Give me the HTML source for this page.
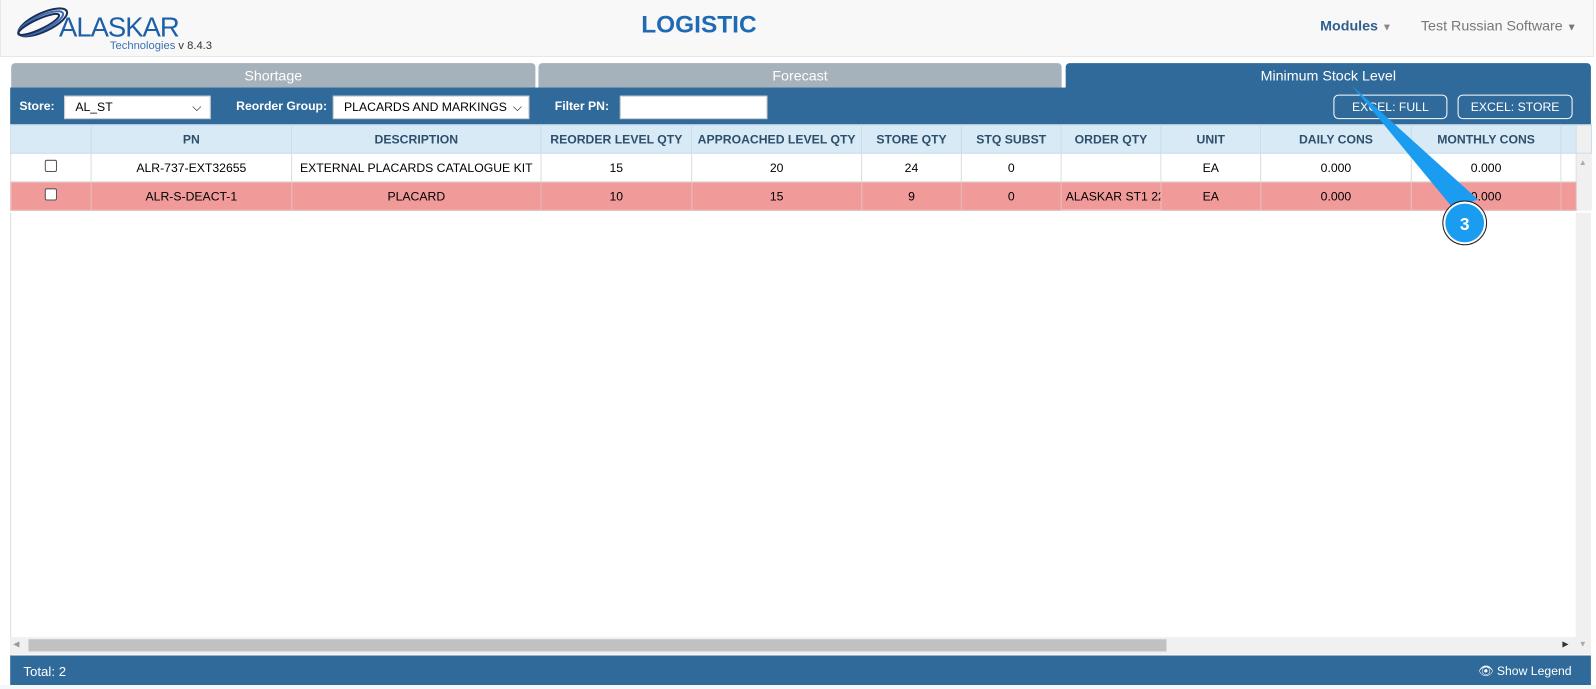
<!DOCTYPE html>
<html><head><meta charset="utf-8"><style>
*{box-sizing:border-box;margin:0;padding:0}
body{width:1596px;height:687px;background:#f3f8fb;font-family:"Liberation Sans",Arial,sans-serif;position:relative;overflow:hidden}
#w{position:absolute;left:0;top:0;width:1568px;height:675px;transform:scale(1.01786);transform-origin:0 0;background:#fff}
.hdr{position:absolute;left:0;top:0;width:1566px;height:56px;background:#f8f8f8;border:1px solid #e7e7e7;border-top:none}
.abs{position:absolute}
.tab{position:absolute;top:62px;height:25px;background:#a5b1bb;color:#fff;font-size:14px;text-align:center;line-height:25px;border-radius:4px 4px 0 0}
.bar{position:absolute;left:10px;top:86px;width:1553px;height:37px;background:#2f6a9a}
.bar label{position:absolute;top:11px;color:#fff;font-weight:bold;font-size:12px}
.sel{position:absolute;top:8px;height:23px;background:#fff;border:1px solid #ccc;font-size:12px;line-height:21px;padding-left:10px;color:#000;overflow:hidden;white-space:nowrap}
.btn{position:absolute;top:7px;height:24px;border:1px solid #fff;border-radius:5px;color:#fff;font-size:12px;text-align:center;line-height:22px}
table{position:absolute;left:10px;top:122px;border-collapse:collapse;font-size:12px}
td,th{height:28px;border:1px solid #ddd;text-align:center;padding:0}
th{height:28px;background:#d9eaf7;color:#2d4f6b;font-weight:bold;border-color:#c9dce9}
tr.p td{background:#f09a9a;border-color:#e6b9b9}
.cb{display:inline-block;width:12px;height:12px;border:1px solid #555;border-radius:2px;background:#fff}
</style></head><body><div id="w">
<div class="hdr"></div>
<svg class="abs" style="left:12px;top:6px" width="60" height="36" viewBox="0 0 60 36">
<g fill="none" stroke="#1b2e5a" stroke-width="2"><ellipse cx="30" cy="16" rx="26" ry="9" transform="rotate(-25 30 16)"/><ellipse cx="28" cy="17" rx="24" ry="7" transform="rotate(-25 28 17)" stroke="#3a6db0"/><ellipse cx="26" cy="18" rx="22" ry="5" transform="rotate(-25 26 18)"/></g></svg>
<div class="abs" style="left:58px;top:12px;font-size:27px;color:#1d5fa8;letter-spacing:-1px">ALASKAR</div>
<div class="abs" style="left:108px;top:39px;font-size:11px;color:#3d72b0">Technologies <span style="color:#333;font-size:11px">v 8.4.3</span></div>
<div class="abs" style="left:630px;top:11px;font-size:24px;font-weight:bold;color:#1f6ab4">LOGISTIC</div>
<div class="abs" style="left:1297px;top:17px;font-size:14px;font-weight:bold;color:#2f5f8f">Modules <span style="color:#888;font-size:10px">▼</span></div>
<div class="abs" style="left:1396px;top:17px;font-size:14px;color:#777">Test Russian Software <span style="font-size:10px">▼</span></div>
<div class="tab" style="left:11px;width:515px">Shortage</div>
<div class="tab" style="left:529px;width:514px">Forecast</div>
<div class="tab" style="left:1047px;width:516px;background:#2f6a9a">Minimum Stock Level</div>
<div class="bar">
<label style="left:9px">Store:</label>
<div class="sel" style="left:53px;width:144px">AL_ST<span style="position:absolute;right:8px;top:0">⌵</span></div>
<label style="left:222px">Reorder Group:</label>
<div class="sel" style="left:317px;width:193px">PLACARDS AND MARKINGS<span style="position:absolute;right:0;top:0;background:#fff;padding:0 6px">⌵</span></div>
<label style="left:535px">Filter PN:</label>
<div class="sel" style="left:599px;width:145px"></div>
<div class="btn" style="left:1300px;width:112px">EXCEL: FULL</div>
<div class="btn" style="left:1422px;width:113px">EXCEL: STORE</div>
</div>
<table>
<tr><th style="width:79px"></th><th style="width:197px">PN</th><th style="width:245px">DESCRIPTION</th><th style="width:148px">REORDER LEVEL QTY</th><th style="width:167px">APPROACHED LEVEL QTY</th><th style="width:98px">STORE QTY</th><th style="width:98px">STQ SUBST</th><th style="width:98px">ORDER QTY</th><th style="width:98px">UNIT</th><th style="width:148px">DAILY CONS</th><th style="width:147px">MONTHLY CONS</th><th style="width:15px"></th><th style="width:15px;background:#f0f0f0"></th></tr>
<tr><td><span class="cb"></span></td><td>ALR-737-EXT32655</td><td>EXTERNAL PLACARDS CATALOGUE KIT</td><td>15</td><td>20</td><td>24</td><td>0</td><td></td><td>EA</td><td>0.000</td><td>0.000</td><td></td><td style="background:#f0f0f0;border:none"></td></tr>
<tr class="p"><td><span class="cb"></span></td><td>ALR-S-DEACT-1</td><td>PLACARD</td><td>10</td><td>15</td><td>9</td><td>0</td><td style="text-align:left;padding-left:4px;white-space:nowrap;overflow:hidden;max-width:98px">ALASKAR ST1 22</td><td>EA</td><td>0.000</td><td>0.000</td><td></td><td style="background:#f0f0f0;border:none"></td></tr>
</table>
<div class="abs" style="left:10px;top:209px;width:1px;height:435px;background:#ddd"></div>
<div class="abs" style="left:1548px;top:209px;width:15px;height:418px;background:#f0f0f0"></div>
<div class="abs" style="left:10px;top:626px;width:1553px;height:17px;background:#f0f0f0"></div>
<div class="abs" style="left:28px;top:628px;width:1118px;height:12px;background:#c1c1c1"></div>
<div class="abs" style="left:13px;top:628px;font-size:8px;color:#999">◀</div>
<div class="abs" style="left:1535px;top:628px;font-size:8px;color:#333">▶</div>
<div class="abs" style="left:1551px;top:628px;font-size:8px;color:#aaa">▼</div>
<div class="abs" style="left:1551px;top:155px;font-size:8px;color:#aaa">▲</div>
<div class="abs" style="left:10px;top:644px;width:1553px;height:29px;background:#2f6a9a;color:#fff;font-size:13px">
<span style="position:absolute;left:13px;top:8px">Total: 2</span>
<span style="position:absolute;right:19px;top:8px;font-size:12px">👁 Show Legend</span></div>
<div class="abs" style="left:0;top:673px;width:1568px;height:4px;background:#f3f8fb"></div>
<svg class="abs" style="left:0;top:0" width="1568" height="675">
<polygon points="1328,84 1427,204 1452,196" fill="#1a9cf0"/>
<circle cx="1439" cy="219" r="20" fill="#1a9cf0" stroke="#fff" stroke-width="2"/>
<circle cx="1439" cy="219" r="21.5" fill="none" stroke="#222" stroke-width="1"/>
<text x="1439" y="226" fill="#fff" font-size="17" font-weight="bold" text-anchor="middle" font-family="Liberation Sans">3</text>
</svg>
</div></body></html>
